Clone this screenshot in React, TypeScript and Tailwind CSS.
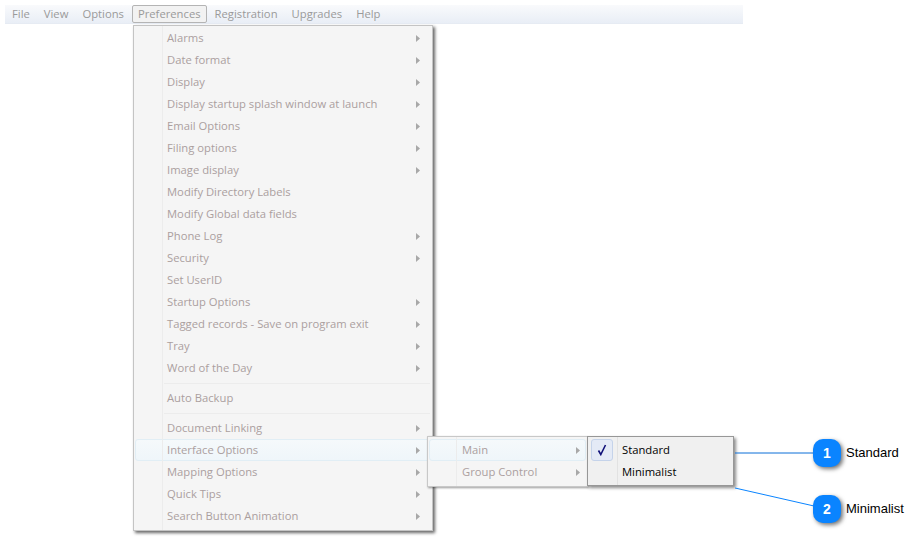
import React from 'react';

const topMenu = ['File', 'View', 'Options', 'Preferences', 'Registration', 'Upgrades', 'Help'];

type Item = { label: string; arrow?: boolean; active?: boolean } | 'sep';

const prefItems: Item[] = [
  { label: 'Alarms', arrow: true },
  { label: 'Date format', arrow: true },
  { label: 'Display', arrow: true },
  { label: 'Display startup splash window at launch', arrow: true },
  { label: 'Email Options', arrow: true },
  { label: 'Filing options', arrow: true },
  { label: 'Image display', arrow: true },
  { label: 'Modify Directory Labels' },
  { label: 'Modify Global data fields' },
  { label: 'Phone Log', arrow: true },
  { label: 'Security', arrow: true },
  { label: 'Set UserID' },
  { label: 'Startup Options', arrow: true },
  { label: 'Tagged records - Save on program exit', arrow: true },
  { label: 'Tray', arrow: true },
  { label: 'Word of the Day', arrow: true },
  'sep',
  { label: 'Auto Backup' },
  'sep',
  { label: 'Document Linking', arrow: true },
  { label: 'Interface Options', arrow: true, active: true },
  { label: 'Mapping Options', arrow: true },
  { label: 'Quick Tips', arrow: true },
  { label: 'Search Button Animation', arrow: true },
];

function Arrow() {
  return (
    <svg width="4" height="7" viewBox="0 0 4 7" className="shrink-0">
      <path d="M0 0L4 3.5L0 7Z" fill="#a8a8a8" />
    </svg>
  );
}

function Row({ label, arrow, active, inset }: { label: string; arrow?: boolean; active?: boolean; inset: string }) {
  return (
    <div
      className={`h-[22px] flex items-center justify-between rounded-[3px] border text-[#ab9f9f] ${inset} ${
        active ? 'border-[#e1eef5] bg-gradient-to-b from-[#f5f9fb] to-[#eff6fa]' : 'border-transparent'
      }`}
    >
      <span className="whitespace-nowrap">{label}</span>
      {arrow && <Arrow />}
    </div>
  );
}

function Callout({ n, label, top }: { n: number; label: string; top: string }) {
  return (
    <div className={`absolute left-[813px] flex items-center gap-[5px] font-['Liberation_Sans',sans-serif] ${top}`}>
      <div className="w-[28px] h-[28px] rounded-[10px] bg-[#0a84ff] text-white font-bold text-[14px] flex items-center justify-center shadow-[2px_2px_4px_rgba(0,0,0,0.55)]">
        {n}
      </div>
      <span className="text-[13px] text-black">{label}</span>
    </div>
  );
}

export default function App() {
  return (
    <div className="relative w-[921px] h-[549px] overflow-hidden bg-white pt-[5px] pl-[5px] text-[11.25px] font-['Open_Sans','Noto_Sans',sans-serif]">
      {/* Menu bar */}
      <div className="w-[738px] h-[19px] flex items-center border-b border-[#e6ebf3] bg-gradient-to-b from-[#f9fafc] to-[#e9eef6] text-[#9a9a9a]">
        {topMenu.map(m => (
          <div
            key={m}
            className={`h-[18px] flex items-center mx-px px-[5px] rounded-[2px] border ${
              m === 'Preferences' ? 'border-[#b4b4b4] bg-[#f2f2f2]' : 'border-transparent'
            }`}
          >
            {m}
          </div>
        ))}
      </div>

      {/* Preferences dropdown */}
      <div className="relative ml-[128px] mt-px w-[300px] h-[506px] bg-[#f5f5f5] border border-[#c4c4c4] shadow-[2px_2px_3px_rgba(0,0,0,0.6)] p-px">
        <div className="absolute left-[28px] top-0 bottom-0 w-px bg-[#ececec]" />
        {prefItems.map((it, i) =>
          it === 'sep' ? (
            <div key={i} className="h-[8px] ml-[29px] mr-px flex items-center">
              <div className="h-px w-full bg-[#ececec]" />
            </div>
          ) : (
            <Row key={i} label={it.label} arrow={it.arrow} active={it.active} inset="pl-[31px] pr-[10px]" />
          )
        )}

        {/* Interface Options submenus */}
        <div className="absolute left-[293px] top-[410px] flex items-start">
          <div className="relative w-[161px] h-[51px] bg-[#f5f5f5] border border-[#c8c8c8] shadow-[1px_1px_2px_rgba(0,0,0,0.4)] p-px pt-[2px]">
            <div className="absolute left-[28px] top-0 bottom-0 w-px bg-[#ececec]" />
            <Row label="Main" arrow active inset="pl-[32px] pr-[5px]" />
            <Row label="Group Control" arrow inset="pl-[32px] pr-[5px]" />
          </div>

          <div className="relative -ml-px w-[147px] h-[50px] bg-[#f0f0f0] border border-[#979797] shadow-[2px_2px_3px_rgba(0,0,0,0.45)] p-px pt-[2px] flex flex-col text-black">
            <div className="absolute left-[29px] top-0 bottom-0 w-px bg-[#e2e2e2]" />
            <div className="absolute left-[3px] top-[2px] w-[22px] h-[22px] rounded-[3px] border border-[#c5d3ea] bg-[#e4eaf6] flex items-center justify-center">
              <svg width="10" height="12" viewBox="0 0 10 12">
                <path d="M1.5 6.5L3.8 10.5L8.5 1" fill="none" stroke="#12127a" strokeWidth="1.6" />
              </svg>
            </div>
            <div className="h-[22px] flex items-center pl-[33px]">Standard</div>
            <div className="h-[22px] flex items-center pl-[33px]">Minimalist</div>
          </div>
        </div>
      </div>

      {/* Callout lines */}
      <svg className="absolute left-0 top-0" width="921" height="549">
        <line x1="735" y1="453" x2="814" y2="453" stroke="#0a6fd8" strokeWidth="1" />
        <line x1="735" y1="488" x2="814" y2="506" stroke="#0a84ff" strokeWidth="1" />
      </svg>

      <Callout n={1} label="Standard" top="top-[439px]" />
      <Callout n={2} label="Minimalist" top="top-[495px]" />
    </div>
  );
}
